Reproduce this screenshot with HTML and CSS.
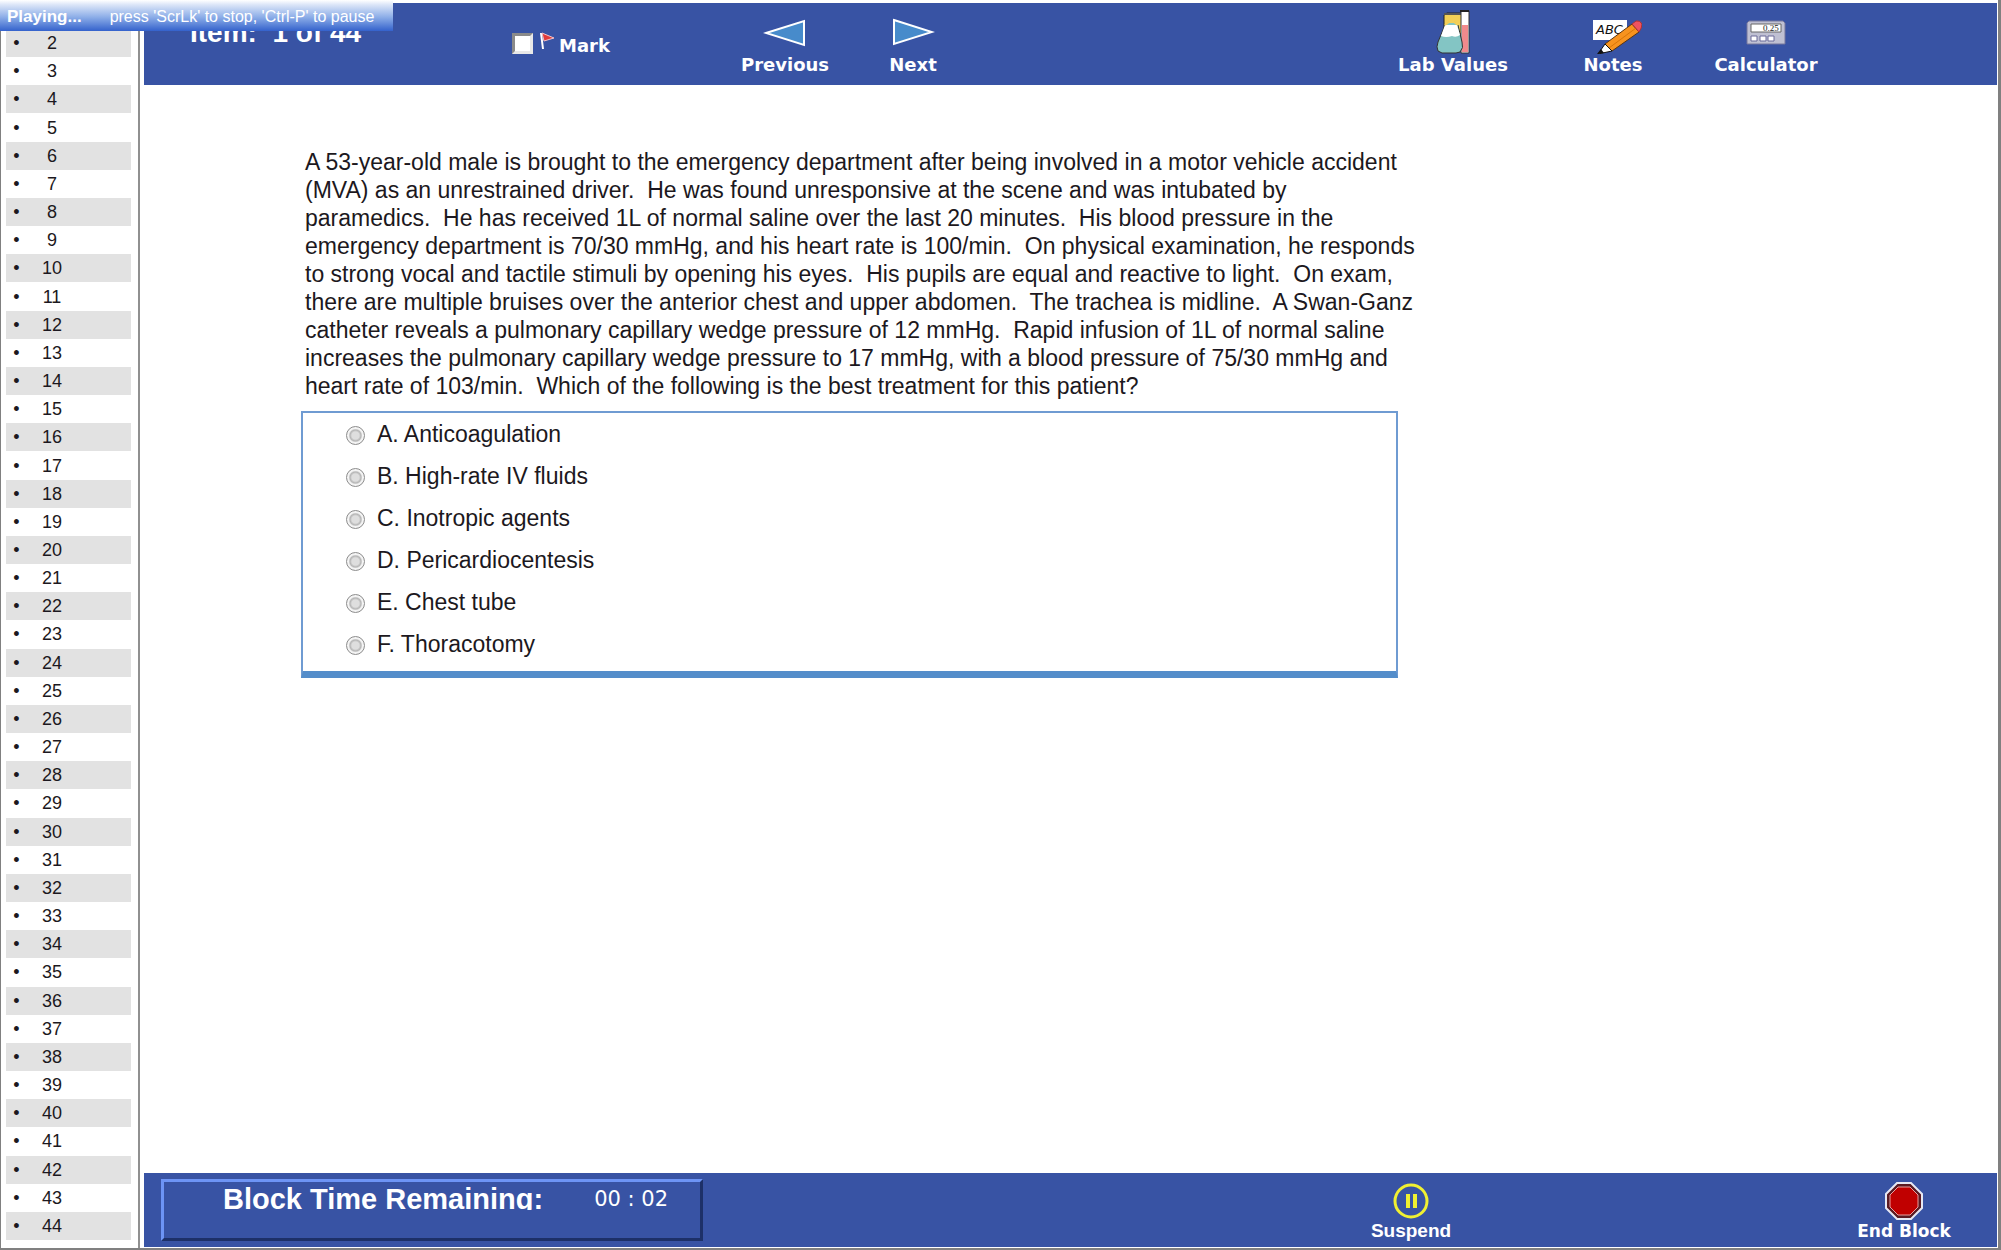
FILE: index.html
```html
<!DOCTYPE html>
<html lang="en">
<head>
    <meta charset="UTF-8">
    <meta name="viewport" content="width=device-width, initial-scale=1">
    <title>Item 1 of 44</title>
    <link rel="stylesheet" href="styles.css">
</head>
<body>
    <div class="player-bar"><b>Playing...</b><span>press 'ScrLk' to stop, 'Ctrl-P' to pause</span></div>

    <nav class="sidebar">
        <ul class="item-list" id="itemList"></ul>
    </nav>

    <div class="exam">
        <header class="topbar">
            <h1>Item:&nbsp; 1 of 44</h1>
            <label class="mark">
                <input type="checkbox" id="mark">
                <svg width="16" height="18" viewBox="0 0 16 18"><path d="M2 1L4 17" stroke="#fff" stroke-width="2"/><path d="M3 1L15 6L5 9Z" fill="#e23b3b" stroke="#f3c3c9"/></svg>
                <span>Mark</span>
            </label>
            <button class="tool">
                <svg width="44" height="44" viewBox="0 0 44 44"><path d="M3 23L41 11V35Z" fill="#478bcb" stroke="#fff" stroke-width="2"/></svg>
                <span>Previous</span>
            </button>
            <button class="tool">
                <svg width="44" height="44" viewBox="0 0 44 44"><path d="M3 10L41 22L3 34Z" fill="#478bcb" stroke="#fff" stroke-width="2"/></svg>
                <span>Next</span>
            </button>
            <button class="tool lab">
                <svg width="34" height="44" viewBox="0 0 34 44">
                    <path d="M8 5L11 3H26V24H8Z" fill="#f2cf58" stroke="#222"/>
                    <path d="M8 4H25" stroke="#555" stroke-width="2"/>
                    <path d="M25 1H33V43H25Z" fill="#fff" stroke="#333"/>
                    <path d="M26 15H32V42H26Z" fill="#f08a8c"/>
                    <path d="M24 1H33" stroke="#222" stroke-width="2"/>
                    <path d="M9 15L13 12H18L22 15L26 32Q28 38 24 42L20 43H6L2 41Q0 37 2 32Z" fill="#83c5c4" stroke="#333"/>
                    <path d="M9 15H21L24 25Q20 28 16 26Q10 28 5 26Z" fill="#fff"/>
                    <path d="M9 15L13 12H18L22 15" fill="none" stroke="#f2cf58" stroke-width="2"/>
                </svg>
                <span>Lab Values</span>
            </button>
            <button class="tool">
                <svg width="58" height="44" viewBox="-8 0 58 44">
                    <path d="M1 10H35V30H1Z" fill="#fff"/>
                    <text class="abc" x="4" y="24">ABC</text>
                    <path d="M40 14L47 22L20 41L13 34Z" fill="#f7931e" stroke="#5a3512"/>
                    <path d="M44 18L17 38" stroke="#d97508"/>
                    <path d="M40 14L44 11Q48 10 50 14Q50 18 47 22Z" fill="#ee5260" stroke="#a33"/>
                    <path d="M13 34L20 41L6 44Z" fill="#fff" stroke="#111"/>
                    <path d="M9 39L12 43L5 44Z" fill="#111"/>
                </svg>
                <span>Notes</span>
            </button>
            <button class="tool">
                <svg width="40" height="44" viewBox="0 0 40 44">
                    <path d="M3 11H37L39 13V34H1V13Z" fill="#bfc0d2" stroke="#75769c"/>
                    <path d="M5 14H35V22H5Z" fill="#fff" stroke="#666"/>
                    <text class="digits" x="17" y="21">0.25</text>
                    <path d="M5 26H11V31H5ZM14 26H20V31H14ZM22 26H28V31H22Z" fill="#fff" stroke="#6a6b9a"/>
                </svg>
                <span>Calculator</span>
            </button>
        </header>

        <main class="question">
            <p class="stem">A 53-year-old male is brought to the emergency department after being involved in a motor vehicle accident<br>
                (MVA) as an unrestrained driver.&nbsp; He was found unresponsive at the scene and was intubated by<br>
                paramedics.&nbsp; He has received 1L of normal saline over the last 20 minutes.&nbsp; His blood pressure in the<br>
                emergency department is 70/30 mmHg, and his heart rate is 100/min.&nbsp; On physical examination, he responds<br>
                to strong vocal and tactile stimuli by opening his eyes.&nbsp; His pupils are equal and reactive to light.&nbsp; On exam,<br>
                there are multiple bruises over the anterior chest and upper abdomen.&nbsp; The trachea is midline.&nbsp; A Swan-Ganz<br>
                catheter reveals a pulmonary capillary wedge pressure of 12 mmHg.&nbsp; Rapid infusion of 1L of normal saline<br>
                increases the pulmonary capillary wedge pressure to 17 mmHg, with a blood pressure of 75/30 mmHg and<br>
                heart rate of 103/min.&nbsp; Which of the following is the best treatment for this patient?</p>
            <form class="answers">
                <label><input type="radio" name="answer" value="A"> A. Anticoagulation</label>
                <label><input type="radio" name="answer" value="B"> B. High-rate IV fluids</label>
                <label><input type="radio" name="answer" value="C"> C. Inotropic agents</label>
                <label><input type="radio" name="answer" value="D"> D. Pericardiocentesis</label>
                <label><input type="radio" name="answer" value="E"> E. Chest tube</label>
                <label><input type="radio" name="answer" value="F"> F. Thoracotomy</label>
            </form>
        </main>

        <footer class="bottombar">
            <div class="timer">
                <span class="timer-label">Block Time Remaining:</span>
                <span class="timer-value">00 : 02</span>
            </div>
            <button class="tool suspend">
                <svg width="38" height="38" viewBox="0 0 38 38"><circle cx="19" cy="19" r="16" fill="none" stroke="#f0f032" stroke-width="3"/><path d="M14 12H18V26H14ZM21 12H25V26H21Z" fill="#f0f032"/></svg>
                <span>Suspend</span>
            </button>
            <button class="tool end">
                <svg width="38" height="38" viewBox="0 0 38 38">
                    <path d="M12 1H26L37 12V26L26 37H12L1 26V12Z" fill="#5a1a22" stroke="#e6e8f4" stroke-width="2"/>
                    <path d="M13 5H25L33 13V25L25 33H13L5 25V13Z" fill="#c00000" stroke="#e9a0a0" stroke-width="1"/>
                </svg>
                <span>End Block</span>
            </button>
        </footer>
    </div>

    <script>
        // item 1 is the open one, the list carries the rest
        const itemList = document.getElementById('itemList');
        for (let i = 2; i <= 44; i++) {
            itemList.innerHTML += `<li><i>•</i><a href="#item${i}">${i}</a></li>`;
        }
    </script>
</body>
</html>
```
FILE: styles.css
```css
* {
    box-sizing: border-box;
}
body {
    display: flex;
    height: 100vh;
    margin: 0;
    background-color: #fff;
    border-left: 1px solid #808080;
    border-right: 3px solid #808080;
    border-bottom: 2px solid #808080;
    font-family: "Liberation Sans", Arial, sans-serif;
    color: #1c1820;
    overflow: hidden;
}
.player-bar {
    position: absolute;
    top: 0;
    left: 0;
    z-index: 1;
    display: flex;
    gap: 28px;
    padding: 3px 19px 0 7px;
    height: 31px;
    line-height: 28px;
    font-size: 16px;
    color: #fff;
    background: linear-gradient(#fff, #dce6f8 15%, #8daee8 55%, #3462cc);
    white-space: nowrap;
}
.player-bar b {
    font-size: 17px;
}
.sidebar {
    width: 139px;
    flex-shrink: 0;
    padding: 29px 7px 8px 5px;
    border-right: 2px solid #909090;
}
.item-list {
    display: grid;
    grid-auto-rows: 1fr;
    height: 100%;
    margin: 0;
    padding: 0;
    list-style: none;
    font-size: 18px;
}
.item-list li {
    display: flex;
    align-items: center;
    min-height: 0;
    line-height: 20px;
}
.item-list li:nth-child(odd) {
    background-color: #e2e2e2;
}
.item-list i {
    width: 21px;
    text-align: center;
    font-style: normal;
}
.item-list a {
    width: 50px;
    text-align: center;
    color: #1c1820;
    text-decoration: none;
}
.exam {
    display: flex;
    flex-direction: column;
    flex: 1;
    min-width: 0;
    padding: 3px 1px 1px 4px;
}
.topbar,
.bottombar {
    display: grid;
    background-color: #3853a4;
    color: #fff;
}
.topbar {
    grid-template-columns: 368fr 209fr 128fr 128fr 396fr 160fr 160fr 146fr 158fr;
    height: 82px;
}
.topbar h1 {
    margin: 0;
    padding: 14px 0 0 46px;
    font-size: 28px;
    line-height: 32px;
    white-space: nowrap;
}
.mark {
    display: flex;
    align-items: center;
    gap: 4px;
    height: 80px;
    font-family: "DejaVu Sans", Verdana, sans-serif;
    font-size: 18px;
    font-weight: bold;
}
.mark svg {
    margin-left: 2px;
    margin-bottom: 4px;
}
.mark span {
    padding-top: 4px;
}
.mark input {
    appearance: none;
    width: 21px;
    height: 21px;
    margin: 0;
    background-color: #fff;
    border: 3px solid;
    border-color: #8a8a8a #e8e8e8 #e8e8e8 #8a8a8a;
}
.tool {
    display: flex;
    flex-direction: column;
    align-items: center;
    gap: 1px;
    padding: 7px 0 0;
    border: none;
    background: none;
    color: #fff;
    font-family: "DejaVu Sans", Verdana, sans-serif;
    font-size: 18px;
    font-weight: bold;
    line-height: 20px;
    white-space: nowrap;
    cursor: pointer;
}
.lab {
    grid-column: 6;
}
.abc {
    font: italic 13px "DejaVu Sans", sans-serif;
    fill: #111;
}
.digits {
    font: 9px "Liberation Serif", serif;
    fill: #222;
}
.question {
    flex: 1;
    padding: 63px 0 0 157px;
}
.stem {
    margin: 0;
    padding-left: 4px;
    font-size: 23px;
    line-height: 28px;
    white-space: nowrap;
}
.answers {
    width: 65%;
    max-width: 1097px;
    margin-top: 11px;
    padding: 0 43px 6px;
    border: 2px solid #6f9bd2;
    border-bottom: 7px solid #548dca;
    font-size: 23px;
}
.answers label {
    display: flex;
    align-items: center;
    gap: 12px;
    height: 42px;
}
.answers input {
    appearance: none;
    width: 19px;
    height: 19px;
    margin: 2px 0 0;
    border: 1px solid #8c8c8c;
    border-radius: 50%;
    background: radial-gradient(circle, #dedede 30%, #b4b4b4 46%, #f4f4f4 58%);
}
.bottombar {
    grid-template-columns: 559fr 628fr 160fr 333fr 160fr 13fr;
    height: 74px;
}
.timer {
    display: flex;
    justify-content: space-between;
    margin: 6px 0 6px 17px;
    padding: 0 32px 0 59px;
    border: 3px solid;
    border-color: #6d94f5 #1d3068 #1d3068 #6d94f5;
    white-space: nowrap;
}
.timer-label {
    height: 28px;
    overflow: hidden;
    font-size: 29px;
    font-weight: bold;
    line-height: 34px;
}
.timer-value {
    font-family: "DejaVu Sans", Verdana, sans-serif;
    font-size: 21px;
    line-height: 34px;
}
.bottombar .tool {
    padding-top: 9px;
    font-size: 17px;
}
.suspend {
    grid-column: 3;
}
.bottombar .suspend {
    font-family: "Liberation Sans", Arial, sans-serif;
    font-size: 19px;
}
.end {
    grid-column: 5;
}
```
